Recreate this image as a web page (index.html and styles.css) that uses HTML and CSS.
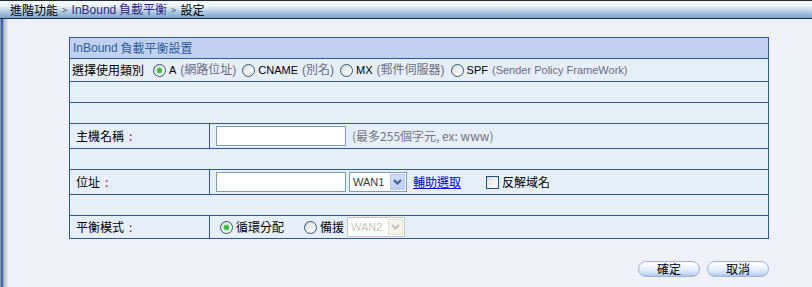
FILE: index.html
```html
<!DOCTYPE html>
<html lang="zh-Hant">
<head>
<meta charset="utf-8">
<title>InBound 負載平衡 設定</title>
<link rel="stylesheet" href="styles.css">
</head>
<body>
<div class="topbar">
  <span class="crumb">進階功能</span><span class="sep">&gt;</span><span class="crumb cur"><span class="en">InBound</span> 負載平衡</span><span class="sep">&gt;</span><span class="crumb">設定</span>
</div>
<div class="main">
  <div class="edge"></div>
  <div class="content">
    <div class="tbl">
      <div class="row h21 head"><span class="en">InBound</span>&nbsp;負載平衡設置</div>
      <div class="row h23 line">
        <span class="lead">選擇使用類別</span>
        <label class="opt"><input class="radio" type="radio" name="kind" checked><span class="key en">A</span><span class="note">(網路位址)</span></label>
        <label class="opt"><input class="radio" type="radio" name="kind"><span class="key en">CNAME</span><span class="note">(別名)</span></label>
        <label class="opt"><input class="radio" type="radio" name="kind"><span class="key en">MX</span><span class="note">(郵件伺服器)</span></label>
        <label class="opt"><input class="radio" type="radio" name="kind"><span class="key en">SPF</span><span class="note en">(Sender Policy FrameWork)</span></label>
      </div>
      <div class="row h21"></div>
      <div class="row h21"></div>
      <div class="row h25 two">
        <div class="lbl">主機名稱<span class="colon">:</span></div>
        <div class="val"><input class="txt" type="text"><span class="hint">(最多255個字元, ex: www)</span></div>
      </div>
      <div class="row h21"></div>
      <div class="row h25 two">
        <div class="lbl">位址<span class="colon">:</span></div>
        <div class="val">
          <input class="txt" type="text">
          <span class="sel"><span class="sel-text en">WAN1</span><span class="sel-btn"><svg width="9" height="6" viewBox="0 0 9 6"><path d="M1 1 L4.5 4.5 L8 1" fill="none" stroke="#4b5d85" stroke-width="2"/></svg></span></span>
          <a class="link" href="#">輔助選取</a>
          <label class="chk"><input class="box" type="checkbox"><span>反解域名</span></label>
        </div>
      </div>
      <div class="row h21"></div>
      <div class="row h23 two">
        <div class="lbl">平衡模式<span class="colon">:</span></div>
        <div class="val">
          <label class="mode"><input class="radio" type="radio" name="mode" checked><span>循環分配</span></label>
          <label class="mode second"><input class="radio" type="radio" name="mode"><span>備援</span></label>
          <span class="sel disabled"><span class="sel-text en">WAN2</span><span class="sel-btn"><svg width="9" height="6" viewBox="0 0 9 6"><path d="M1 1 L4.5 4.5 L8 1" fill="none" stroke="#c4c3ba" stroke-width="2"/></svg></span></span>
        </div>
      </div>
    </div>
    <div class="actions">
      <button class="btn" type="button">確定</button>
      <button class="btn" type="button">取消</button>
    </div>
  </div>
</div>
</body>
</html>
```
FILE: styles.css
```css
html, body {
  margin: 0;
  padding: 0;
}
body {
  width: 812px;
  height: 287px;
  overflow: hidden;
  background: #eff0f8;
  font-family: "Noto Sans CJK TC", "Liberation Sans", sans-serif;
  font-size: 12px;
  color: #000;
}
.en {
  font-family: "Liberation Sans", "Noto Sans CJK TC", sans-serif;
  font-size: 11px;
}

/* top breadcrumb bar */
.topbar {
  box-sizing: border-box;
  height: 19px;
  border-top: 1px solid #1f2a32;
  border-bottom: 1px solid #1e2b52;
  background: linear-gradient(to bottom, #f6fbfd 0%, #f0f7fb 25%, #cfe2ef 45%, #a6c5df 70%, #7aa3c8 100%);
  display: flex;
  align-items: center;
  padding-left: 10px;
  line-height: 16px;
}
.topbar .en { font-size: 12px; }
.crumb { color: #000; }
.crumb.cur { color: #3a2386; }
.sep {
  color: #555;
  font-size: 10px;
  margin: 0 4px;
}

.main {
  display: flex;
  height: 268px;
}
.edge {
  width: 8px;
  flex: none;
  background: linear-gradient(to right, #8a97b8 0, #8a97b8 1px, #3f62b5 1px, #3f62b5 3px, #9aa0ae 3px, #c4c8d2 5px, #e6e8f0 8px);
}
.content {
  padding: 18px 0 0 61px;
}

/* table */
.tbl {
  width: 700px;
  box-sizing: border-box;
  border: 1px solid #2b5a97;
  border-top: none;
  background: #e6eef8;
}
.row {
  box-sizing: border-box;
  border-top: 1px solid #2b5a97;
  display: flex;
  align-items: center;
  line-height: 16px;
}
.h21 { height: 21px; }
.h23 { height: 23px; }
.h25 { height: 25px; }
.head {
  background: #c0d0ee;
  color: #2e5f9f;
  padding-left: 3px;
}
.head .en { font-size: 12px; }
.line { padding-left: 2px; }
.lead { margin-right: 9px; }

.opt {
  display: flex;
  align-items: center;
  margin-right: 6px;
}
.key { margin-left: 3px; }
.note {
  font-family: "Liberation Sans", "Noto Sans CJK TC", sans-serif;
  color: #6c6c84;
  margin-left: 4px;
}
.note.en { font-size: 11px; }

.two { align-items: stretch; }
.lbl {
  width: 139px;
  flex: none;
  display: flex;
  align-items: center;
  padding-left: 6px;
  box-sizing: border-box;
}
.colon {
  color: #99007a;
  margin-left: 5px;
}
.val {
  flex: 1;
  border-left: 1px solid #2b5a97;
  display: flex;
  align-items: center;
  padding-left: 6px;
}

/* controls */
.radio {
  -webkit-appearance: none;
  appearance: none;
  width: 13px;
  height: 13px;
  margin: 0;
  border: 1px solid #2a5784;
  border-radius: 50%;
  box-sizing: border-box;
  background: linear-gradient(135deg, #d6d6cf 0%, #eeeeea 45%, #ffffff 100%);
  flex: none;
}
.radio:checked {
  background: radial-gradient(circle at 50% 50%, #2fb02f 0, #45c845 2px, #6ad06a 2.8px, transparent 3.2px), linear-gradient(135deg, #d6d6cf 0%, #eeeeea 45%, #ffffff 100%);
}
.box {
  -webkit-appearance: none;
  appearance: none;
  width: 13px;
  height: 13px;
  margin: 0;
  border: 1px solid #1c5180;
  box-sizing: border-box;
  background: linear-gradient(135deg, #dcdcd5 0%, #f4f4f1 60%, #ffffff 100%);
  flex: none;
}

.txt {
  box-sizing: border-box;
  width: 130px;
  height: 20px;
  margin: 0;
  padding: 0 2px;
  border: 1px solid #7f9db9;
  background: #fff;
  font: inherit;
}
.hint {
  color: #75757f;
  margin-left: 6px;
}

.sel {
  box-sizing: border-box;
  width: 58px;
  height: 20px;
  margin-left: 3px;
  border: 1px solid #7f9db9;
  background: #fff;
  display: flex;
  align-items: stretch;
  padding: 1px;
}
.sel-text {
  flex: 1;
  color: #3a3a3a;
  padding-left: 2px;
  display: flex;
  align-items: center;
}
.sel-btn {
  width: 15px;
  background: linear-gradient(to bottom, #d3defc, #bccdf8);
  border: 1px solid #b6c8f2;
  box-sizing: border-box;
  display: flex;
  align-items: center;
  justify-content: center;
}
.sel.disabled {
  border-color: #c9c7ba;
  background: #fff;
}
.sel.disabled .sel-text { color: #c6c6bc; }
.sel.disabled .sel-btn {
  background: #f4f3ee;
  border-color: #e4e2d8;
}

.link {
  color: #0000ee;
  text-decoration: underline;
  margin-left: 6px;
}
.chk {
  display: flex;
  align-items: center;
  margin-left: 25px;
}
.chk span { margin-left: 3px; }

.mode {
  display: flex;
  align-items: center;
  margin-left: 4px;
}
.mode span { margin-left: 3px; }
.mode.second { margin-left: 20px; }
.mode.second span { margin-right: 3px; }
.val .mode + .sel { margin-left: 0; }

/* buttons */
.actions {
  width: 700px;
  display: flex;
  justify-content: flex-end;
  gap: 7px;
  margin-top: 22px;
}
.btn {
  box-sizing: border-box;
  width: 62px;
  height: 16px;
  margin: 0;
  padding: 0;
  border: 1px solid #9db4dc;
  border-radius: 8px;
  background: linear-gradient(to bottom, #ffffff 0%, #eef4fd 40%, #d2e1f7 75%, #aec6ee 100%);
  font-family: "Noto Sans CJK TC", sans-serif;
  font-size: 12px;
  line-height: 14px;
  color: #000;
  cursor: pointer;
}
```
